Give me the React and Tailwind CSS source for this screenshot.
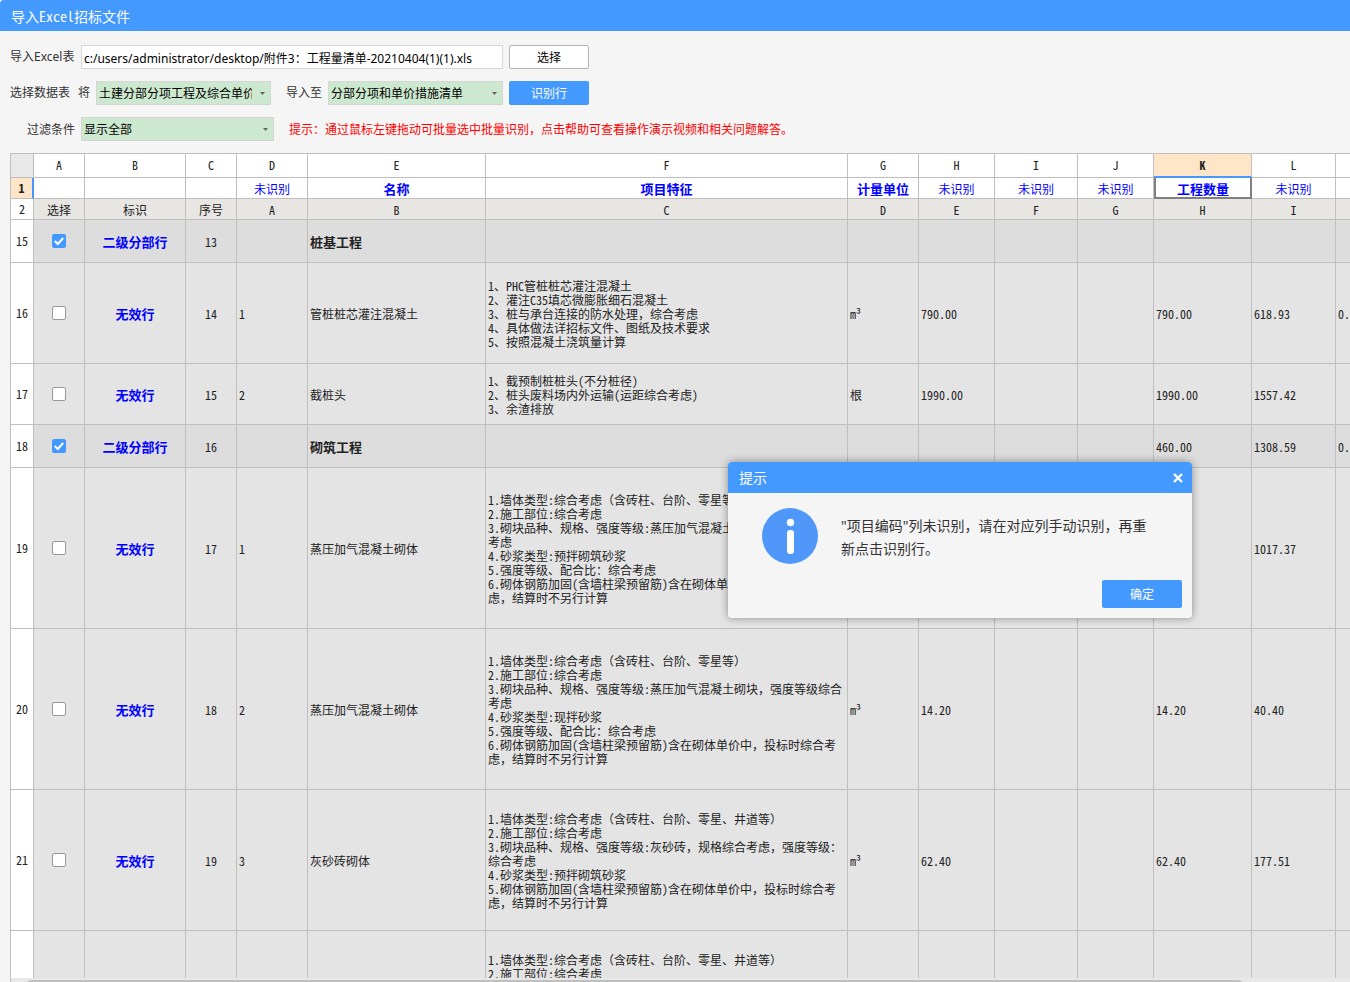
import React, { useState } from "react";
import clsx from "clsx";

const COLUMNS = [
  { id: "A", width: "w-[51px]", field: "", head: "选择" },
  { id: "B", width: "w-[101px]", field: "", head: "标识" },
  { id: "C", width: "w-[51px]", field: "", head: "序号" },
  { id: "D", width: "w-[71px]", field: "未识别", head: "A" },
  { id: "E", width: "w-[178px]", field: "名称", head: "B" },
  { id: "F", width: "w-[362px]", field: "项目特征", head: "C" },
  { id: "G", width: "w-[71px]", field: "计量单位", head: "D" },
  { id: "H", width: "w-[76px]", field: "未识别", head: "E" },
  { id: "I", width: "w-[83px]", field: "未识别", head: "F" },
  { id: "J", width: "w-[76px]", field: "未识别", head: "G" },
  { id: "K", width: "w-[98px]", field: "工程数量", head: "H", active: true },
  { id: "L", width: "w-[84px]", field: "未识别", head: "I" },
  { id: "M", width: "w-[84px]", field: "", head: "" },
];

const ROWS = [
  { row: 15, height: "h-[43px]", section: true, mark: "二级分部行", no: "13", name: "桩基工程" },
  {
    row: 16,
    height: "h-[101px]",
    mark: "无效行",
    no: "14",
    d: "1",
    name: "管桩桩芯灌注混凝土",
    feature: [
      "1、PHC管桩桩芯灌注混凝土",
      "2、灌注C35填芯微膨胀细石混凝土",
      "3、桩与承台连接的防水处理，综合考虑",
      "4、具体做法详招标文件、图纸及技术要求",
      "5、按照混凝土浇筑量计算",
    ],
    unit: "m³",
    h: "790.00",
    k: "790.00",
    l: "618.93",
    m: "0.",
  },
  {
    row: 17,
    height: "h-[61px]",
    mark: "无效行",
    no: "15",
    d: "2",
    name: "截桩头",
    feature: [
      "1、截预制桩桩头(不分桩径)",
      "2、桩头废料场内外运输(运距综合考虑)",
      "3、余渣排放",
    ],
    unit: "根",
    h: "1990.00",
    k: "1990.00",
    l: "1557.42",
  },
  {
    row: 18,
    height: "h-[43px]",
    section: true,
    mark: "二级分部行",
    no: "16",
    name: "砌筑工程",
    k: "460.00",
    l: "1308.59",
    m: "0.",
  },
  {
    row: 19,
    height: "h-[161px]",
    mark: "无效行",
    no: "17",
    d: "1",
    name: "蒸压加气混凝土砌体",
    feature: [
      "1.墙体类型:综合考虑（含砖柱、台阶、零星等）",
      "2.施工部位:综合考虑",
      "3.砌块品种、规格、强度等级:蒸压加气混凝土砌块，强度等级综合",
      "考虑",
      "4.砂浆类型:预拌砌筑砂浆",
      "5.强度等级、配合比：综合考虑",
      "6.砌体钢筋加固(含墙柱梁预留筋)含在砌体单价中，投标时综合考",
      "虑，结算时不另行计算",
    ],
    l: "1017.37",
  },
  {
    row: 20,
    height: "h-[161px]",
    mark: "无效行",
    no: "18",
    d: "2",
    name: "蒸压加气混凝土砌体",
    feature: [
      "1.墙体类型:综合考虑（含砖柱、台阶、零星等）",
      "2.施工部位:综合考虑",
      "3.砌块品种、规格、强度等级:蒸压加气混凝土砌块，强度等级综合",
      "考虑",
      "4.砂浆类型:现拌砂浆",
      "5.强度等级、配合比：综合考虑",
      "6.砌体钢筋加固(含墙柱梁预留筋)含在砌体单价中，投标时综合考",
      "虑，结算时不另行计算",
    ],
    unit: "m³",
    h: "14.20",
    k: "14.20",
    l: "40.40",
  },
  {
    row: 21,
    height: "h-[141px]",
    mark: "无效行",
    no: "19",
    d: "3",
    name: "灰砂砖砌体",
    feature: [
      "1.墙体类型:综合考虑（含砖柱、台阶、零星、井道等）",
      "2.施工部位:综合考虑",
      "3.砌块品种、规格、强度等级:灰砂砖，规格综合考虑，强度等级：",
      "综合考虑",
      "4.砂浆类型:预拌砌筑砂浆",
      "5.砌体钢筋加固(含墙柱梁预留筋)含在砌体单价中，投标时综合考",
      "虑，结算时不另行计算",
    ],
    unit: "m³",
    h: "62.40",
    k: "62.40",
    l: "177.51",
  },
];

const LAST_FEATURE = [
  "1.墙体类型:综合考虑（含砖柱、台阶、零星、井道等）",
  "2.施工部位:综合考虑",
];

const BORDER = "border-r border-b border-[#bfbfbf]";

const SelectBox = ({ id, value, width }) => (
  <div className={clsx("relative h-6", width)}>
    <select
      id={id}
      defaultValue={value}
      className="h-6 w-full appearance-none border border-[#d6d6d6] bg-[#cce8cf] pt-0.5 pl-0.5 pr-[18px] text-xs text-black outline-none"
    >
      <option value={value}>{value}</option>
    </select>
    <svg
      className="pointer-events-none absolute right-1.5 top-[11px]"
      width="5"
      height="3"
      viewBox="0 0 5 3"
    >
      <path d="M0 0h5L2.5 3z" fill="#666" />
    </svg>
  </div>
);

const RowCheck = ({ row, checked }) => (
  <span className="relative mx-auto block size-3.5">
    <input
      type="checkbox"
      aria-label={`选择 ${row}`}
      defaultChecked={checked}
      className="peer block size-3.5 appearance-none rounded-[2px] border border-[#999] bg-white checked:border-[#4499ff] checked:bg-[#4499ff]"
    />
    <svg
      className="pointer-events-none absolute inset-0 hidden peer-checked:block"
      width="14"
      height="14"
      viewBox="0 0 14 14"
      fill="none"
    >
      <path d="M2.8 7l3 3 5.4-6" stroke="#fff" strokeWidth="2" />
    </svg>
  </span>
);

const TextCell = ({ children, className }) => (
  <td className={clsx(BORDER, "whitespace-pre p-0 pl-0.5 pt-px", className)}>{children}</td>
);

/**
 * Toolbar - file path, sheet mapping and row filter
 */
const Toolbar = () => (
  <div className="flex flex-col gap-3 px-2.5 pt-3.5 text-xs whitespace-nowrap text-[#333]">
    <div className="flex h-6 items-center gap-1.5">
      <label htmlFor="path" className="w-[65px]">
        导入Excel表
      </label>
      <input
        id="path"
        type="text"
        defaultValue="c:/users/administrator/desktop/附件3：工程量清单-20210404(1)(1).xls"
        className="h-6 w-[422px] border border-[#d6d6d6] bg-white px-0.5 pt-0.5 text-black outline-none"
      />
      <button className="h-6 w-20 rounded-[2px] border border-[#b4b4b4] bg-white pt-0.5 text-black">
        选择
      </button>
    </div>
    <div className="flex h-6 items-center gap-1.5">
      <label htmlFor="source" className="flex gap-2">
        <span>选择数据表</span>
        <span>将</span>
      </label>
      <SelectBox id="source" value="土建分部分项工程及综合单价" width="w-[175px]" />
      <label htmlFor="target" className="pl-[9px]">
        导入至
      </label>
      <SelectBox id="target" value="分部分项和单价措施清单" width="w-[175px]" />
      <button className="h-6 w-20 rounded-[2px] bg-[#4499ff] pt-0.5 text-white">识别行</button>
    </div>
    <div className="flex h-6 items-center gap-1.5">
      <label htmlFor="filter" className="w-[65px] pt-0.5 text-right">
        过滤条件
      </label>
      <SelectBox id="filter" value="显示全部" width="w-[193px]" />
      <p className="pt-0.5 pl-[9px] text-[#ff0000]">
        提示：通过鼠标左键拖动可批量选中批量识别，点击帮助可查看操作演示视频和相关问题解答。
      </p>
    </div>
  </div>
);

const Sheet = () => (
  <table className="w-[1410px] table-fixed border-separate border-spacing-0 border-t border-l border-[#bfbfbf] text-xs leading-[14px] text-[#222]">
    <thead>
      <tr className="h-6">
        <td className={clsx(BORDER, "w-[23px] bg-[#e8e8e8]")} />
        {COLUMNS.map((col) => (
          <th
            key={col.id}
            className={clsx(
              col.width,
              "border-r border-[#bfbfbf] p-0",
              col.active
                ? "border-b-2 border-b-[#4499ff] bg-[#ffe6c8] font-bold"
                : "border-b bg-white pb-0.5 font-normal"
            )}
          >
            {col.id === "M" ? "" : col.id}
          </th>
        ))}
      </tr>
      <tr className="h-[21px]">
        <th className="border-r-2 border-b border-r-[#4499ff] border-b-[#bfbfbf] bg-[#ffe6c8] p-0 font-bold">
          1
        </th>
        {COLUMNS.map((col) => (
          <td
            key={col.id}
            className={clsx(
              "bg-white p-0 pt-0.5 text-center text-[#0000ff]",
              col.active ? "border-2 border-t-0 border-[#808080]" : BORDER,
              col.field === "未识别" ? "text-xs" : "text-[13px] font-bold"
            )}
          >
            {col.field}
          </td>
        ))}
      </tr>
      <tr className="h-[21px]">
        <th className={clsx(BORDER, "bg-white p-0 font-normal")}>2</th>
        {COLUMNS.map((col) => (
          <td key={col.id} className={clsx(BORDER, "bg-[#e8e6e2] p-0 pt-px text-center")}>
            {col.head}
          </td>
        ))}
      </tr>
    </thead>
    <tbody>
      {ROWS.map((item) => (
        <tr key={item.row} className={clsx(item.height, item.section ? "bg-[#dddddd]" : "bg-[#e4e4e4]")}>
          <th className={clsx(BORDER, "bg-white p-0 font-normal")}>{item.row}</th>
          <td className={clsx(BORDER, "p-0")}>
            <RowCheck row={item.row} checked={item.section} />
          </td>
          <td className={clsx(BORDER, "p-0 pt-px text-center text-[13px] font-bold text-[#0000ff]")}>
            {item.mark}
          </td>
          <td className={clsx(BORDER, "p-0 pt-px text-center")}>{item.no}</td>
          <TextCell>{item.d}</TextCell>
          <TextCell className={item.section && "text-[13px] font-bold"}>{item.name}</TextCell>
          <TextCell>{item.feature?.join("\n")}</TextCell>
          <TextCell>{item.unit}</TextCell>
          <TextCell>{item.h}</TextCell>
          <TextCell />
          <TextCell />
          <TextCell>{item.k}</TextCell>
          <TextCell>{item.l}</TextCell>
          <TextCell>{item.m}</TextCell>
        </tr>
      ))}
      {/* Row cut off by the bottom of the window */}
      <tr className="h-[141px] bg-[#e4e4e4]">
        <th className={clsx(BORDER, "bg-white")} />
        {COLUMNS.map((col) => (
          <td key={col.id} className={clsx(BORDER, "whitespace-pre p-0 pl-0.5 pt-[22px] align-top")}>
            {col.id === "F" ? LAST_FEATURE.join("\n") : ""}
          </td>
        ))}
      </tr>
    </tbody>
  </table>
);

const InfoDialog = ({ onClose }) => (
  <div
    role="dialog"
    aria-labelledby="dialog-title"
    className="absolute left-[728px] top-[462px] w-[464px] overflow-hidden rounded-[4px] bg-[#f5f5f5] shadow-[0_0_8px_rgba(0,0,0,0.4)]"
  >
    <div className="flex h-[31px] items-center justify-between bg-[#4499ff] pl-[11px] pr-[9px] text-white">
      <h2 id="dialog-title" className="text-sm">
        提示
      </h2>
      <button aria-label="关闭" onClick={onClose}>
        <svg width="10" height="10" viewBox="0 0 10 10" fill="none">
          <path d="M1 1l8 8M9 1L1 9" stroke="#fff" strokeWidth="2.4" />
        </svg>
      </button>
    </div>
    <div className="flex gap-[23px] pt-[15px] pl-[34px] pr-8">
      <svg className="shrink-0" width="56" height="56" viewBox="0 0 56 56">
        <circle cx="28" cy="28" r="28" fill="#4f98fa" />
        <circle cx="28.5" cy="14.5" r="3.7" fill="#fff" />
        <rect x="25" y="22" width="7" height="24" rx="3" fill="#fff" />
      </svg>
      <p className="pt-1.5 text-sm leading-[23px] whitespace-pre text-[#333]">
        {'"项目编码"列未识别，请在对应列手动识别，再重\n新点击识别行。'}
      </p>
    </div>
    <div className="flex justify-end px-2.5 pt-4 pb-2.5">
      <button
        onClick={onClose}
        className="h-7 w-20 rounded-[2px] bg-[#4499ff] pt-0.5 text-xs text-white"
      >
        确定
      </button>
    </div>
  </div>
);

const App = () => {
  const [isDialogOpen, setIsDialogOpen] = useState(true);

  return (
    <div className="relative flex h-screen flex-col overflow-hidden bg-[#f5f5f5] font-['Noto_Sans','Noto_Sans_CJK_SC',sans-serif]">
      <header className="flex h-[31px] shrink-0 items-center rounded-tl-[4px] bg-[#4499ff] pl-[11px] font-['Noto_Sans_Mono_CJK_SC','Noto_Sans_CJK_SC',sans-serif]">
        <h1 className="text-sm text-white">导入Excel招标文件</h1>
      </header>

      <Toolbar />

      <main className="mt-3 ml-2.5 flex min-h-0 flex-1 flex-col">
        <div className="min-h-0 flex-1 overflow-hidden font-['Noto_Sans_Mono_CJK_SC','Noto_Sans_CJK_SC',sans-serif]">
          <Sheet />
        </div>
        {/* Horizontal scrollbar */}
        <div className="h-1 shrink-0 overflow-hidden border-l border-[#bfbfbf] bg-[#e8e8e8] pt-0.5 pl-[15px]">
          <div className="h-3 w-[92%] rounded-full bg-[#bfbfbf]" />
        </div>
      </main>

      {isDialogOpen && <InfoDialog onClose={() => setIsDialogOpen(false)} />}
    </div>
  );
};

export default App;
